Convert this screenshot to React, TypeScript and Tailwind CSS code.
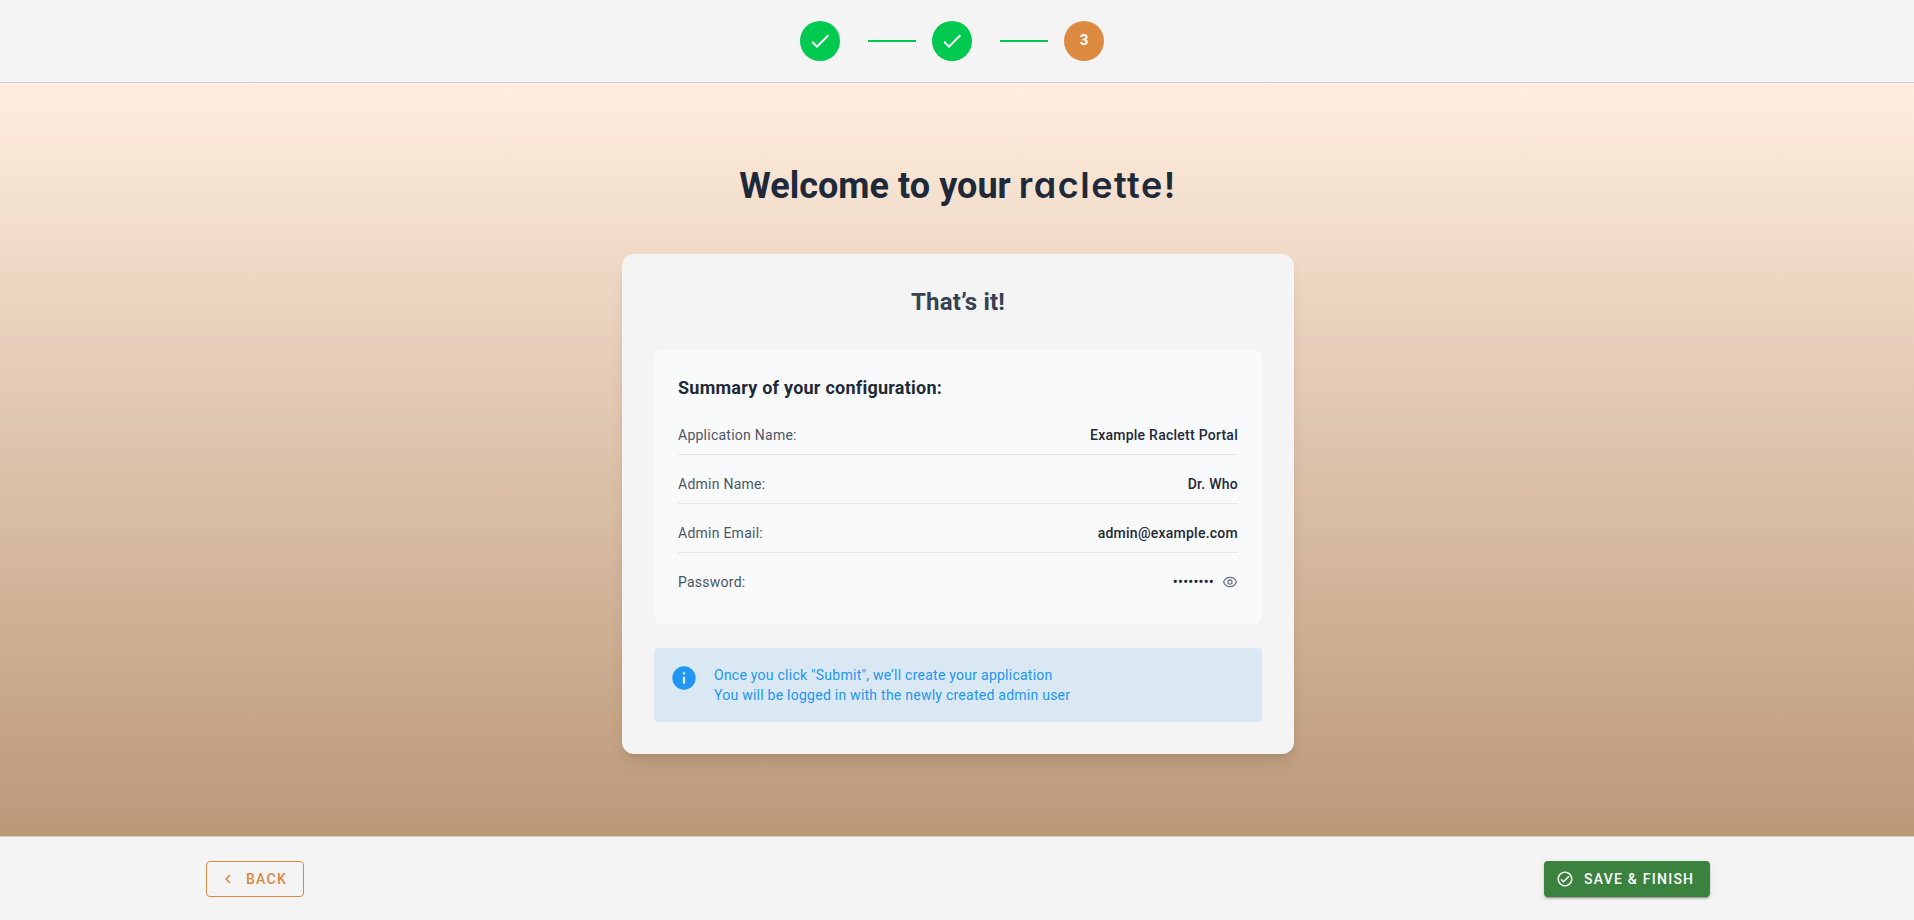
import type { ReactNode } from "react";

const ICONS = {
  check: "M21,7L9,19L3.5,13.5L4.91,12.09L9,16.17L19.59,5.59L21,7Z",
  info: "M13,9H11V7H13M13,17H11V11H13M12,2A10,10 0 0,0 2,12A10,10 0 0,0 12,22A10,10 0 0,0 22,12A10,10 0 0,0 12,2Z",
  left: "M15.41,16.58L10.83,12L15.41,7.41L14,6L8,12L14,18L15.41,16.58Z",
  done: "M12 2C6.5 2 2 6.5 2 12S6.5 22 12 22 22 17.5 22 12 17.5 2 12 2M12 20C7.59 20 4 16.41 4 12S7.59 4 12 4 20 7.59 20 12 16.41 20 12 20M16.59 7.58L10 14.17L7.41 11.59L6 13L10 17L18 9L16.59 7.58Z",
};

function Icon({ name, className }: { name: keyof typeof ICONS; className: string }) {
  return (
    <svg viewBox="0 0 24 24" fill="currentColor" className={className}>
      <path d={ICONS[name]} />
    </svg>
  );
}

function EyeIcon() {
  return (
    <svg
      viewBox="0 0 16 16"
      fill="none"
      stroke="currentColor"
      strokeWidth="1.2"
      strokeLinejoin="round"
      className="size-4 text-gray-500"
    >
      <path d="M1.6 8C2.5 5.2 5 3.3 8 3.3S13.5 5.2 14.4 8C13.5 10.8 11 12.7 8 12.7S2.5 10.8 1.6 8Z" />
      <circle cx="8" cy="8" r="2.1" />
    </svg>
  );
}

function Step({ children, active = false }: { children: ReactNode; active?: boolean }) {
  return (
    <div
      className={
        active
          ? "flex size-10 items-center justify-center rounded-full bg-[#dc8a40] text-[15px] font-bold tracking-normal text-white"
          : "flex size-10 items-center justify-center rounded-full bg-[#00c950] text-white"
      }
    >
      {children}
    </div>
  );
}

function Row({ label, children, last = false }: { label: string; children: ReactNode; last?: boolean }) {
  return (
    <div
      className={
        last
          ? "flex h-[37px] items-center justify-between pb-[3px]"
          : "flex h-[37px] items-center justify-between border-b border-gray-200 pb-0.5"
      }
    >
      <span className="text-gray-600">{label}</span>
      <span className="flex items-center font-medium text-gray-800">{children}</span>
    </div>
  );
}

export default function App() {
  return (
    <div className="flex h-[920px] flex-col bg-[#f4f4f4] font-['Roboto',sans-serif] text-sm tracking-[0.25px]">
      <header className="flex h-[83px] shrink-0 items-center justify-center border-b border-[#cfcfcf] pr-[10px]">
        <Step>
          <Icon name="check" className="size-6" />
        </Step>
        <div className="mr-4 ml-7 h-0.5 w-12 bg-[#00c950]" />
        <Step>
          <Icon name="check" className="size-6" />
        </Step>
        <div className="mr-4 ml-7 h-0.5 w-12 bg-[#00c950]" />
        <Step active>3</Step>
      </header>

      <main className="flex flex-1 flex-col items-center bg-linear-to-b from-[#ffeedf] to-[#bb9878] pt-[82px] pl-[2px]">
        <h1 className="mb-12 text-4xl leading-10 font-bold tracking-[0.04px] text-[#1e2939]">
          Welcome to your{" "}
          <span className="-ml-px font-['Inter',sans-serif] font-[560] tracking-[1.5px] [font-feature-settings:'cv11']">
            raclette!
          </span>
        </h1>

        <section className="h-[500px] w-[672px] rounded-xl bg-[#f4f4f4] p-8 shadow-lg">
          <h2 className="mb-8 text-center text-2xl font-bold tracking-[0.2px] text-[#364153]">That’s it!</h2>

          <div className="mb-6 h-[274px] rounded-lg bg-[#f9fafb] px-6 pt-6">
            <h3 className="mb-4 text-lg leading-7 font-bold tracking-[0.24px] text-[#1e2939]">
              Summary of your configuration:
            </h3>
            <div className="flex flex-col gap-3">
              <Row label="Application Name:">Example Raclett Portal</Row>
              <Row label="Admin Name:">Dr. Who</Row>
              <Row label="Admin Email:">admin@example.com</Row>
              <Row label="Password:" last>
                <span className="mr-2">••••••••</span>
                <EyeIcon />
              </Row>
            </div>
          </div>

          <div className="flex h-[74px] rounded bg-[#dae8f3] px-4 pt-[17px] leading-5 text-[#2196f3]">
            <Icon name="info" className="-mt-px mr-4 size-7 shrink-0" />
            <p>
              Once you click "Submit", we’ll create your application
              <br />
              You will be logged in with the newly created admin user
            </p>
          </div>
        </section>
      </main>

      <footer className="flex h-[84px] shrink-0 items-center justify-center border-t border-[#cfcfcf] pl-[2px]">
        <div className="flex w-[1504px] items-center justify-between font-medium tracking-[1.25px]">
          <button className="flex h-9 w-[98px] items-center rounded border border-[#dc8a40] pl-3 text-[#dc8a40]">
            <Icon name="left" className="mr-[9px] size-[18px]" />
            BACK
          </button>
          <button className="flex h-9 w-[166px] items-center rounded bg-[#3b823f] pl-3 text-white shadow-[0_3px_1px_-2px_rgba(0,0,0,0.2),0_2px_2px_0_rgba(0,0,0,0.14),0_1px_5px_0_rgba(0,0,0,0.12)]">
            <Icon name="done" className="mr-[10px] size-[18px]" />
            SAVE &amp; FINISH
          </button>
        </div>
      </footer>
    </div>
  );
}
